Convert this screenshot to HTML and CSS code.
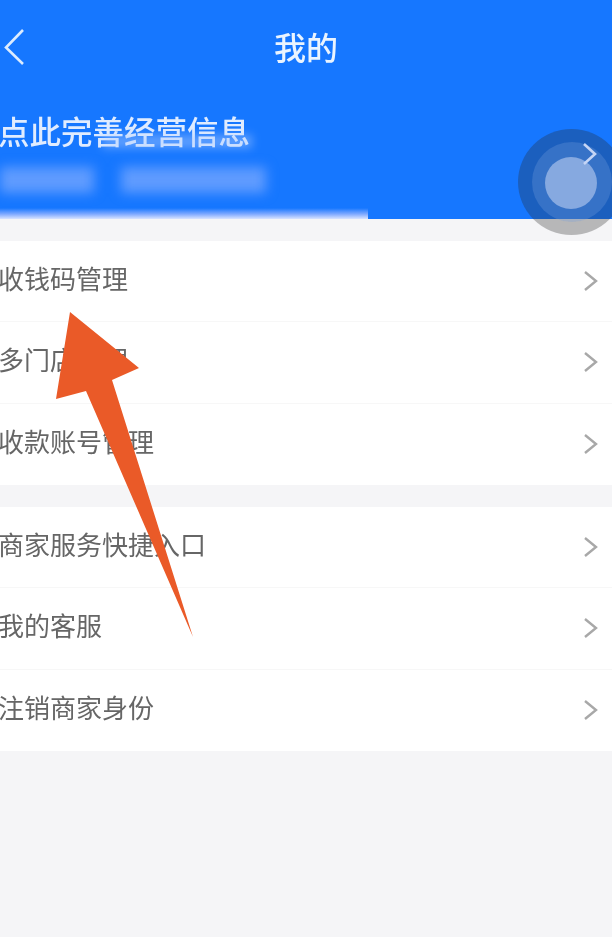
FILE: index.html
```html
<!DOCTYPE html>
<html lang="zh-CN">
<head>
<meta charset="utf-8">
<title>我的</title>
<link rel="stylesheet" href="styles.css">
</head>
<body>
<div class="page">
  <header class="header">
    <div class="navbar">
      <svg class="back" viewBox="0 0 24 44" width="24" height="44"><path d="M21 5 L4 22.5 L21 39" fill="none" stroke="#dcecff" stroke-width="2.6"/></svg>
      <h1 class="title">我的</h1>
    </div>
    <div class="profile">
      <div class="profile-name">点此完善经营信息</div>
      <div class="name-smear"></div>
      <div class="blur-line">
        <span class="blur-a"></span>
        <span class="blur-b"></span>
      </div>
      <div class="blur-bottom"></div>
    </div>
  </header>

  <section class="group group-first">
    <div class="row"><span class="label">收钱码管理</span><svg class="chev" viewBox="0 0 16 24" width="16" height="24"><path d="M2 3 L13 12 L2 21" fill="none" stroke="#a8a8a8" stroke-width="2.4"/></svg></div>
    <div class="row"><span class="label">多门店管理</span><svg class="chev" viewBox="0 0 16 24" width="16" height="24"><path d="M2 3 L13 12 L2 21" fill="none" stroke="#a8a8a8" stroke-width="2.4"/></svg></div>
    <div class="row"><span class="label">收款账号管理</span><svg class="chev" viewBox="0 0 16 24" width="16" height="24"><path d="M2 3 L13 12 L2 21" fill="none" stroke="#a8a8a8" stroke-width="2.4"/></svg></div>
  </section>

  <section class="group">
    <div class="row"><span class="label">商家服务快捷入口</span><svg class="chev" viewBox="0 0 16 24" width="16" height="24"><path d="M2 3 L13 12 L2 21" fill="none" stroke="#a8a8a8" stroke-width="2.4"/></svg></div>
    <div class="row"><span class="label">我的客服</span><svg class="chev" viewBox="0 0 16 24" width="16" height="24"><path d="M2 3 L13 12 L2 21" fill="none" stroke="#a8a8a8" stroke-width="2.4"/></svg></div>
    <div class="row"><span class="label">注销商家身份</span><svg class="chev" viewBox="0 0 16 24" width="16" height="24"><path d="M2 3 L13 12 L2 21" fill="none" stroke="#a8a8a8" stroke-width="2.4"/></svg></div>
  </section>

  <div class="assist">
    <div class="assist-mid"></div>
    <div class="assist-core"></div>
  </div>

  <svg class="chev-head" viewBox="0 0 16 24" width="16" height="24"><path d="M2 2 L13 12 L2 22" fill="none" stroke="#c5d5f5" stroke-width="2.6"/></svg>

  <svg class="arrow" viewBox="0 0 612 937" width="612" height="937">
    <polygon points="70,312 139,368 112,380 193,637 86,391 56,399" fill="#ea5a28"/>
  </svg>
</div>
</body>
</html>
```

FILE: styles.css
```css
* { box-sizing: border-box; }

html, body {
  margin: 0;
  padding: 0;
}

body {
  background: #f5f5f7;
  font-family: "Noto Sans CJK SC", "Noto Sans", sans-serif;
}

.page {
  position: relative;
  width: 612px;
  height: 937px;
  overflow: hidden;
  background: #f5f5f7;
}

.header {
  position: relative;
  height: 219px;
  background: #1677ff;
  display: flex;
  flex-direction: column;
}

.navbar {
  height: 96px;
  padding-bottom: 4px;
  display: flex;
  align-items: center;
  justify-content: center;
  position: relative;
}

.back {
  position: absolute;
  left: 2px;
  top: 25px;
  filter: blur(0.5px);
}

.title {
  margin: 0;
  font-size: 32px;
  font-weight: 500;
  line-height: 44px;
  color: #eaf4ff;
  filter: blur(0.6px);
}

.profile {
  position: relative;
  flex: 1;
}

.profile-name {
  margin-top: 14px;
  margin-left: -2px;
  font-size: 31.5px;
  line-height: 40px;
  font-weight: 500;
  color: #e0ecff;
  white-space: nowrap;
  filter: blur(0.7px);
}

.name-smear {
  position: relative;
  width: 150px;
  height: 13px;
  margin-left: 102px;
  margin-top: -15px;
  background: #a9c9ff;
  opacity: 0.5;
  filter: blur(5px);
}

.blur-line {
  display: flex;
  gap: 27px;
  margin-top: 19px;
  filter: blur(6px);
}

.blur-a {
  width: 94px;
  height: 26px;
  background: #5f9bff;
}

.blur-b {
  width: 145px;
  height: 26px;
  background: #5f9bff;
}

.blur-bottom {
  width: 368px;
  height: 11px;
  margin-top: 15px;
  background: linear-gradient(to bottom, #1677ff, #7fa9ff 55%, #d9e4ff);
}

.group {
  background: #fff;
  margin-top: 22px;
}

.row {
  height: 81.33px;
  display: flex;
  align-items: center;
  justify-content: space-between;
  padding-right: 13px;
  border-bottom: 1px solid #f7f7f7;
}

.row:last-child {
  border-bottom: 0;
}

.label {
  margin-left: -2px;
  padding-bottom: 6px;
  font-size: 26px;
  line-height: 36px;
  color: #666;
  white-space: nowrap;
  filter: blur(0.6px);
}

.chev {
  display: block;
  flex: none;
  filter: blur(0.5px);
}

.assist {
  position: absolute;
  left: 518px;
  top: 129px;
  width: 107px;
  height: 106px;
  border-radius: 50%;
  background: rgba(40, 40, 40, 0.3);
  display: flex;
  align-items: center;
  justify-content: center;
  filter: blur(0.7px);
}

.assist-mid {
  width: 80px;
  height: 80px;
  border-radius: 50%;
  background: rgba(120, 160, 220, 0.3);
}

.assist-core {
  position: absolute;
  left: 27px;
  top: 28px;
  width: 52px;
  height: 52px;
  border-radius: 50%;
  background: #86a9e0;
}

.chev-head {
  position: absolute;
  left: 582px;
  top: 142px;
  filter: blur(0.5px);
}

.arrow {
  position: absolute;
  left: 0;
  top: 0;
  pointer-events: none;
}
```
